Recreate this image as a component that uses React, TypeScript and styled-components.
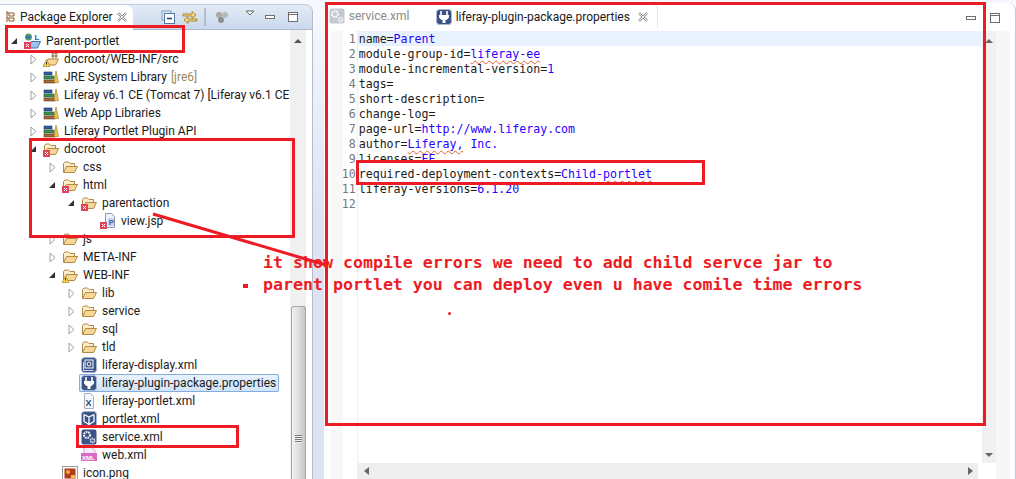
import React from 'react';
import styled, { createGlobalStyle } from 'styled-components';

const GlobalStyle = createGlobalStyle`
  html, body { margin: 0; padding: 0; background: #dde3f3; overflow: hidden; }
  #root { width: 1016px; height: 479px; }
  svg { flex: none; display: block; }
`;

const RED = '#ed1c24';
const VALUE = '#2a00ff';

const Page = styled.div`
  position: relative;
  display: flex;
  width: 1016px;
  height: 479px;
  overflow: hidden;
  background: linear-gradient(#f8f9fe, #dde3f3 45%);
  font-family: Roboto, sans-serif;
`;

const ExplorerPanel = styled.section`
  display: flex;
  flex-direction: column;
  width: 312px;
  margin-top: 4px;
  background: #fff;
  border-right: 1px solid #b4bdcc;
  border-top-right-radius: 8px;
  overflow: hidden;
`;

const ViewBar = styled.header`
  display: flex;
  align-items: center;
  height: 24px;
  flex: none;
  background: linear-gradient(#e3ebf6, #c9d9ec);
  border-top: 1px solid #c0ccdc;
  border-bottom: 1px solid #a9b9cf;
  border-top-right-radius: 8px;
`;

const ViewTab = styled.div`
  display: flex;
  align-items: center;
  width: 133px;
  height: 25px;
  margin: -1px 0 -1px;
  padding: 0 6px 0 5px;
  box-sizing: border-box;
  background: #fff;
  border-top-right-radius: 8px;
  font-size: 12px;
  color: #1a1a1a;
`;

const TabLabel = styled.span<{ $gap?: number }>`
  margin-left: ${(p) => p.$gap ?? 5}px;
  white-space: nowrap;
`;

const CloseMark = styled.svg`
  margin-left: auto;
`;

const ToolSlot = styled.span<{ $x: number; $raise?: number }>`
  display: flex;
  margin-left: ${(p) => p.$x}px;
  margin-bottom: ${(p) => p.$raise ?? 0}px;
`;

const ExplorerBody = styled.div`
  display: flex;
  flex: 1;
  min-height: 0;
`;

const TreeList = styled.ul`
  flex: none;
  width: 290px;
  margin: 0;
  padding: 2px 0 0;
  list-style: none;
  overflow: hidden;
`;

const Row = styled.li<{ $depth: number }>`
  display: flex;
  align-items: center;
  height: 18px;
  padding-left: ${(p) => 8 + p.$depth * 19}px;
  font-size: 12px;
  color: #1a1a1a;
  white-space: nowrap;
`;

const Twisty = styled.span`
  display: flex;
  align-items: center;
  justify-content: center;
  flex: none;
  width: 12px;
  margin-right: 4px;
`;

const NodeContent = styled.span<{ $selected?: boolean }>`
  display: flex;
  align-items: center;
  height: 18px;
  ${(p) =>
    p.$selected &&
    `
    margin-left: -2px;
    padding-left: 2px;
    width: 198px;
    background: linear-gradient(#eaf3fd, #d0e3f9);
    box-shadow: inset 0 0 0 1px #84acdd;
    border-radius: 2px;
  `}
`;

const NodeLabel = styled.span`
  margin-left: 5px;
`;

const Decoration = styled.span`
  margin-left: 4px;
  color: #9a8a5c;
`;

const Scrollbar = styled.div`
  flex: none;
  display: flex;
  flex-direction: column;
  align-items: center;
  width: 16px;
  background: #f0f0f0;
`;

const ScrollArrow = styled.svg`
  margin-top: 8px;
`;

const ScrollThumb = styled.div`
  margin-top: auto;
  width: 15px;
  height: 173px;
  box-sizing: border-box;
  padding-top: 128px;
  border: 1px solid #a8a8a8;
  border-bottom: 0;
  border-radius: 3px 3px 0 0;
  background: linear-gradient(90deg, #f2f2f2, #dcdcdc 55%, #c4c4c4);
`;

const Grip = styled.div`
  width: 7px;
  height: 8px;
  margin: 0 auto;
  background: repeating-linear-gradient(#777 0 1px, #eee 1px 2px);
`;

const EditorPanel = styled.section`
  display: flex;
  flex-direction: column;
  width: 692px;
  margin: 3px 0 0 11px;
  background: #fff;
  border-right: 1px solid #c4c8d4;
  border-top-right-radius: 8px;
  border-top-left-radius: 8px;
`;

const TabStrip = styled.header`
  display: flex;
  align-items: flex-end;
  flex: none;
  height: 28px;
`;

const EditorTab = styled.div<{ $active?: boolean }>`
  display: flex;
  align-items: center;
  height: 24px;
  padding: ${(p) => (p.$active ? '0 9px 0 3px' : '0 0 0 5px')};
  box-sizing: border-box;
  margin-bottom: 3px;
  width: ${(p) => (p.$active ? '225px' : '109px')};
  font-size: 12px;
  color: ${(p) => (p.$active ? '#1a1a1a' : '#8c8c8c')};
  ${(p) => p.$active && 'border-top: 1px solid #eceff4; border-right: 1px solid #e2e5ea; border-radius: 6px 6px 0 0;'}
`;

const EditorTools = styled.div`
  display: flex;
  align-items: center;
  gap: 14px;
  margin: 0 15px 8px auto;
`;

const EditorBody = styled.div`
  display: flex;
  flex: 1;
  min-height: 0;
`;

const Ruler = styled.div`
  flex: none;
  width: 27px;
  margin-left: 7px;
  background: linear-gradient(90deg, #f8f8f8 12px, #fff 12px);
  border-right: 1px solid #f0f0f0;
  box-sizing: border-box;
  padding-right: 1px;
`;

const LineNumber = styled.div`
  height: 15px;
  padding-top: 1px;
  box-sizing: border-box;
  line-height: 15px;
  text-align: right;
  font-family: 'DejaVu Sans Mono', monospace;
  font-size: 11.6px;
  color: #787878;
`;

const CodeColumn = styled.div`
  display: flex;
  flex-direction: column;
  flex: none;
  width: 623px;
`;

const Code = styled.div`
  flex: 1;
  font-family: 'DejaVu Sans Mono', monospace;
  font-size: 11.6px;
  color: #1a1a1a;
`;

const CodeLine = styled.div<{ $current?: boolean }>`
  height: 15px;
  padding: 1px 0 0 1px;
  box-sizing: border-box;
  line-height: 15px;
  white-space: pre;
  background: ${(p) => (p.$current ? '#e8f2fe' : 'transparent')};
`;

const Value = styled.span<{ $misspelt?: boolean }>`
  color: ${VALUE};
  ${(p) => p.$misspelt && 'text-decoration: underline wavy #e0603a 1px; text-underline-offset: 2px;'}
`;

const HScroll = styled.div`
  display: flex;
  align-items: center;
  justify-content: space-between;
  flex: none;
  height: 16px;
  margin-right: 3px;
  padding: 0 5px 0 6px;
  background: #eee;
`;

const VScroll = styled.div`
  display: flex;
  flex-direction: column;
  align-items: center;
  justify-content: space-between;
  flex: none;
  width: 14px;
  margin-left: 1px;
  padding: 7px 0 21px;
  box-sizing: border-box;
  background: linear-gradient(#f0f0f0 432px, #fff 432px);
`;

const EditorMargin = styled.div`
  flex: none;
  width: 14px;
  background: #f7f7f7;
`;

const Box = styled.div<{ $x: number; $y: number; $w: number; $h: number }>`
  position: absolute;
  left: ${(p) => p.$x}px;
  top: ${(p) => p.$y}px;
  width: ${(p) => p.$w}px;
  height: ${(p) => p.$h}px;
  box-sizing: border-box;
  border: 3px solid ${RED};
`;

const Note = styled.div`
  position: absolute;
  left: 263px;
  top: 252px;
  font-family: 'DejaVu Sans Mono', monospace;
  font-weight: 700;
  font-size: 16.6px;
  line-height: 22px;
  color: ${RED};
  white-space: pre;
`;

const Arrow = styled.svg`
  position: absolute;
  left: 0;
  top: 0;
  pointer-events: none;
`;

const Bullet = styled.div<{ $x: number; $y: number; $round?: boolean }>`
  position: absolute;
  left: ${(p) => p.$x}px;
  top: ${(p) => p.$y}px;
  width: ${(p) => (p.$round ? 3 : 5)}px;
  height: ${(p) => (p.$round ? 3 : 4)}px;
  background: ${RED};
  border-radius: ${(p) => (p.$round ? '50%' : '0')};
`;

const IconLetter = styled.text`
  font-family: 'Liberation Sans', sans-serif;
  font-weight: 700;
`;

type Badge = 'error' | 'warn' | undefined;

const BadgeMark = ({ kind }: { kind: Badge }) => {
  if (kind === 'error') {
    return (
      <g>
        <rect x="0" y="9" width="7" height="7" fill="#e2435a" />
        <path d="M2 11l3 3M5 11l-3 3" stroke="#fff" strokeWidth="1" />
      </g>
    );
  }
  if (kind === 'warn') {
    return (
      <g>
        <path d="M3.5 8.5L7 15.5H0z" fill="#f5d34f" stroke="#a98a1f" strokeWidth=".7" />
        <path d="M3.5 11v2.5" stroke="#333" strokeWidth="1" />
      </g>
    );
  }
  return null;
};

const Folder = ({ badge }: { badge?: Badge }) => (
  <svg width="16" height="16" viewBox="0 0 16 16">
    <path d="M1.5 13V4.5L3 3h3.5L8 4.5h4.5V7" fill="#fbeccb" stroke="#b28a45" />
    <path d="M1.5 13.5L4.5 7.5H15.5L12.5 13.5z" fill="#f6d798" stroke="#b28a45" />
    <BadgeMark kind={badge} />
  </svg>
);

const ProjectIcon = () => (
  <svg width="17" height="17" viewBox="0 0 17 17">
    <circle cx="4.5" cy="4" r="3.5" fill="#4f9a6c" />
    <path d="M2 2.5c2 1 4 0 5 2-2 2-3 0-5 1z" fill="#3c6fb4" />
    <IconLetter x="10.5" y="7" fontSize="8" fill="#2457b8">L</IconLetter>
    <path d="M7 8.5h9.5L13.5 15H6z" fill="#9cc2ea" stroke="#3e73b5" />
    <BadgeMark kind="error" />
  </svg>
);

const SourceFolder = () => (
  <svg width="16" height="16" viewBox="0 0 16 16">
    <path d="M2 14L5 8H15.5L12.5 14z" fill="#f6d798" stroke="#b28a45" />
    <path d="M8 2h7M8 5h7M10 .5v7M13 .5v7" stroke="#8a6a2a" strokeWidth="1" />
    <BadgeMark kind="warn" />
  </svg>
);

const Library = () => (
  <svg width="16" height="16" viewBox="0 0 16 16">
    <rect x="1" y="3" width="8" height="3" fill="#2f5f9e" stroke="#1c3660" strokeWidth=".6" />
    <rect x="1" y="7" width="10" height="3" fill="#3f8d52" stroke="#225a30" strokeWidth=".6" />
    <rect x="1" y="11" width="11" height="3" fill="#a6683a" stroke="#613a1c" strokeWidth=".6" />
    <path d="M11 13.5L13 2l2.5 11.5z" fill="#f1c54a" stroke="#99791c" strokeWidth=".6" />
  </svg>
);

const JspIcon = () => (
  <svg width="16" height="16" viewBox="0 0 16 16">
    <path d="M5.5 .5h6l3 3v11h-9z" fill="#eef2fa" stroke="#8c98ac" />
    <rect x="8" y="5" width="6" height="8" fill="#c5d5ee" />
    <IconLetter x="8.7" y="12" fontSize="8" fill="#4464a8">P</IconLetter>
    <BadgeMark kind="error" />
  </svg>
);

const BlueTile = ({ children }: { children: React.ReactNode }) => (
  <svg width="16" height="16" viewBox="0 0 16 16">
    <rect x=".5" y=".5" width="15" height="15" rx="3" fill="#3c5388" stroke="#a9b6d1" />
    {children}
  </svg>
);

const DisplayIcon = () => (
  <BlueTile>
    <rect x="4" y="3" width="8" height="8" fill="none" stroke="#fff" />
    <circle cx="8" cy="7" r="2" fill="none" stroke="#fff" />
    <path d="M2.5 5v8.5h10" fill="none" stroke="#cfd8ea" />
  </BlueTile>
);

const PluginIcon = () => (
  <BlueTile>
    <path d="M5 2v4M11 2v4" stroke="#fff" strokeWidth="1.6" />
    <path d="M3 6h10v2.5L10.5 11h-1v3h-3v-3h-1L3 8.5z" fill="#fff" />
  </BlueTile>
);

const XmlFile = () => (
  <svg width="16" height="16" viewBox="0 0 16 16">
    <path d="M3.5 .5h6l3 3v12h-9z" fill="#f2f5fa" stroke="#a5afbf" />
    <IconLetter x="4.6" y="13" fontSize="9" fill="#27447e">X</IconLetter>
  </svg>
);

const PortletIcon = () => (
  <BlueTile>
    <path d="M3 3.5L8 6l5-2.5M8 6v7.5M3 3.5v7L8 13.5l5-3v-7" fill="none" stroke="#fff" strokeWidth="1.3" />
  </BlueTile>
);

const GearIcon = ({ muted }: { muted?: boolean }) => (
  <svg width="16" height="16" viewBox="0 0 16 16">
    <rect x=".5" y=".5" width="15" height="15" rx="2" fill={muted ? '#c4c8d0' : '#3c5388'} />
    <circle cx="6" cy="6" r="3" fill="none" stroke="#fff" strokeWidth="2" strokeDasharray="1.6 .9" />
    <circle cx="11.5" cy="11.5" r="2" fill="none" stroke="#fff" strokeWidth="1.6" strokeDasharray="1.2 .7" />
  </svg>
);

const WebXml = () => (
  <svg width="16" height="16" viewBox="0 0 16 16">
    <path d="M3 .5h8l3 3v3H3z" fill="#f5eef8" stroke="#c0a8cc" />
    <rect x="0" y="6" width="16" height="8" fill="#d86cc6" />
    <IconLetter x="1" y="12.5" fontSize="6" fill="#fff">XML</IconLetter>
  </svg>
);

const PngIcon = () => (
  <svg width="16" height="16" viewBox="0 0 16 16">
    <rect x=".5" y="1.5" width="15" height="14" fill="#fff" stroke="#9a9a9a" />
    <rect x="2.5" y="3.5" width="11" height="10" fill="#b33a1f" />
    <circle cx="6" cy="7" r="2" fill="#f0b429" />
    <rect x="9" y="10" width="4" height="3" fill="#e8c04a" />
  </svg>
);

const TwistyOpen = () => (
  <svg width="8" height="8" viewBox="0 0 8 8">
    <path d="M7 1v6H1z" fill="#333" />
  </svg>
);

const TwistyClosed = () => (
  <svg width="7" height="11" viewBox="0 0 7 11">
    <path d="M1 1l5 4.5L1 10z" fill="#fff" stroke="#a0a0a0" />
  </svg>
);

type Node = {
  label: string;
  depth: number;
  icon: React.ReactNode;
  twisty?: 'open' | 'closed';
  note?: string;
  selected?: boolean;
};

const nodes: Node[] = [
  { label: 'Parent-portlet', depth: 0, twisty: 'open', icon: <ProjectIcon /> },
  { label: 'docroot/WEB-INF/src', depth: 1, twisty: 'closed', icon: <SourceFolder /> },
  { label: 'JRE System Library', depth: 1, twisty: 'closed', icon: <Library />, note: '[jre6]' },
  { label: 'Liferay v6.1 CE (Tomcat 7) [Liferay v6.1 CE', depth: 1, twisty: 'closed', icon: <Library /> },
  { label: 'Web App Libraries', depth: 1, twisty: 'closed', icon: <Library /> },
  { label: 'Liferay Portlet Plugin API', depth: 1, twisty: 'closed', icon: <Library /> },
  { label: 'docroot', depth: 1, twisty: 'open', icon: <Folder badge="error" /> },
  { label: 'css', depth: 2, twisty: 'closed', icon: <Folder /> },
  { label: 'html', depth: 2, twisty: 'open', icon: <Folder badge="error" /> },
  { label: 'parentaction', depth: 3, twisty: 'open', icon: <Folder badge="error" /> },
  { label: 'view.jsp', depth: 4, icon: <JspIcon /> },
  { label: 'js', depth: 2, twisty: 'closed', icon: <Folder /> },
  { label: 'META-INF', depth: 2, twisty: 'closed', icon: <Folder /> },
  { label: 'WEB-INF', depth: 2, twisty: 'open', icon: <Folder badge="warn" /> },
  { label: 'lib', depth: 3, twisty: 'closed', icon: <Folder /> },
  { label: 'service', depth: 3, twisty: 'closed', icon: <Folder /> },
  { label: 'sql', depth: 3, twisty: 'closed', icon: <Folder /> },
  { label: 'tld', depth: 3, twisty: 'closed', icon: <Folder /> },
  { label: 'liferay-display.xml', depth: 3, icon: <DisplayIcon /> },
  { label: 'liferay-plugin-package.properties', depth: 3, icon: <PluginIcon />, selected: true },
  { label: 'liferay-portlet.xml', depth: 3, icon: <XmlFile /> },
  { label: 'portlet.xml', depth: 3, icon: <PortletIcon /> },
  { label: 'service.xml', depth: 3, icon: <GearIcon /> },
  { label: 'web.xml', depth: 3, icon: <WebXml /> },
  { label: 'icon.png', depth: 2, icon: <PngIcon /> },
];

const MinimizeIcon = () => (
  <svg width="10" height="5" viewBox="0 0 10 5">
    <rect x=".5" y=".5" width="9" height="3" fill="#fff" stroke="#6e6e6e" />
  </svg>
);

const MaximizeIcon = () => (
  <svg width="10" height="10" viewBox="0 0 10 10">
    <rect x=".5" y=".5" width="9" height="9" fill="#fff" stroke="#6e6e6e" />
    <path d="M.5 2.5h9" stroke="#6e6e6e" />
  </svg>
);

const CloseIcon = () => (
  <CloseMark width="10" height="10" viewBox="0 0 10 10">
    <path d="M1 1l8 8M9 1l-8 8" stroke="#8a8a8a" strokeWidth="2.4" />
    <path d="M1 1l8 8M9 1l-8 8" stroke="#fff" strokeWidth=".9" />
  </CloseMark>
);

const App = () => (
  <Page>
    <GlobalStyle />
    <ExplorerPanel>
      <ViewBar>
        <ViewTab>
          <svg width="10" height="12" viewBox="0 0 10 12">
            <path d="M2 0v11M2 2h7v3H4V2M2 7h7v3H4V7" fill="#fff" stroke="#8a5a2a" />
          </svg>
          <TabLabel>Package Explorer</TabLabel>
          <CloseIcon />
        </ViewTab>
        <ToolSlot $x={28}>
          <svg width="14" height="14" viewBox="0 0 14 14">
            <rect x="1" y="1" width="9" height="9" fill="#dce6f4" stroke="#8aa0bc" />
            <rect x="3.5" y="3.5" width="10" height="10" fill="#fff" stroke="#4f78a8" />
            <path d="M6 8.5h5" stroke="#1f3f70" strokeWidth="1.4" />
          </svg>
        </ToolSlot>
        <ToolSlot $x={7}>
          <svg width="16" height="15" viewBox="0 0 16 15">
            <path d="M1 4h9V1.5L14 5l-4 3.5V6H1z" fill="#f5d98c" stroke="#b08a2c" />
            <path d="M15 9H6V6.5L2 10l4 3.5V11h9z" fill="#f5d98c" stroke="#b08a2c" />
          </svg>
        </ToolSlot>
        <ToolSlot $x={6}>
          <svg width="2" height="18" viewBox="0 0 2 18">
            <path d="M1 0v18" stroke="#8c9aae" />
          </svg>
        </ToolSlot>
        <ToolSlot $x={9}>
          <svg width="14" height="14" viewBox="0 0 14 14">
            <circle cx="4" cy="5" r="3" fill="#a8a8a8" />
            <circle cx="10" cy="5" r="3" fill="#b8b8b8" />
            <circle cx="6" cy="10" r="3" fill="#8e8e8e" />
          </svg>
        </ToolSlot>
        <ToolSlot $x={16} $raise={7}>
          <svg width="10" height="7" viewBox="0 0 10 7">
            <path d="M1 1h8L5 5z" fill="#fff" stroke="#666" />
          </svg>
        </ToolSlot>
        <ToolSlot $x={10}><MinimizeIcon /></ToolSlot>
        <ToolSlot $x={13}><MaximizeIcon /></ToolSlot>
      </ViewBar>
      <ExplorerBody>
        <TreeList>
          {nodes.map((node) => (
            <Row key={node.label} $depth={node.depth}>
              <Twisty>
                {node.twisty === 'open' && <TwistyOpen />}
                {node.twisty === 'closed' && <TwistyClosed />}
              </Twisty>
              <NodeContent $selected={node.selected}>
                {node.icon}
                <NodeLabel>
                  {node.label}
                  {node.note && <Decoration>{node.note}</Decoration>}
                </NodeLabel>
              </NodeContent>
            </Row>
          ))}
        </TreeList>
        <Scrollbar>
          <ScrollArrow width="8" height="5" viewBox="0 0 8 5">
            <path d="M0 5l4-4 4 4z" fill="#555" />
          </ScrollArrow>
          <ScrollThumb>
            <Grip />
          </ScrollThumb>
        </Scrollbar>
      </ExplorerBody>
    </ExplorerPanel>

    <EditorPanel>
      <TabStrip>
        <EditorTab>
          <GearIcon muted />
          <TabLabel $gap={4}>service.xml</TabLabel>
        </EditorTab>
        <EditorTab $active>
          <PluginIcon />
          <TabLabel $gap={4}>liferay-plugin-package.properties</TabLabel>
          <CloseIcon />
        </EditorTab>
        <EditorTools>
          <MinimizeIcon />
          <MaximizeIcon />
        </EditorTools>
      </TabStrip>
      <EditorBody>
        <Ruler>
          {Array.from({ length: 12 }, (_, i) => (
            <LineNumber key={i}>{i + 1}</LineNumber>
          ))}
        </Ruler>
        <CodeColumn>
          <Code>
            <CodeLine $current>name=<Value>Parent</Value></CodeLine>
            <CodeLine>module-group-id=<Value $misspelt>liferay-ee</Value></CodeLine>
            <CodeLine>module-incremental-version=<Value>1</Value></CodeLine>
            <CodeLine>tags=</CodeLine>
            <CodeLine>short-description=</CodeLine>
            <CodeLine>change-log=</CodeLine>
            <CodeLine>page-url=<Value>http://www.liferay.com</Value></CodeLine>
            <CodeLine>author=<Value $misspelt>Liferay,</Value><Value> Inc.</Value></CodeLine>
            <CodeLine>licenses=<Value>EE</Value></CodeLine>
            <CodeLine>required-deployment-contexts=<Value>Child-</Value><Value $misspelt>portlet</Value></CodeLine>
            <CodeLine>liferay-versions=<Value>6.1.20</Value></CodeLine>
            <CodeLine />
          </Code>
          <HScroll>
            <svg width="5" height="8" viewBox="0 0 5 8"><path d="M5 0L0 4l5 4z" fill="#666" /></svg>
            <svg width="5" height="8" viewBox="0 0 5 8"><path d="M0 0l5 4-5 4z" fill="#666" /></svg>
          </HScroll>
        </CodeColumn>
        <VScroll>
          <svg width="8" height="5" viewBox="0 0 8 5"><path d="M0 5l4-4 4 4z" fill="#666" /></svg>
          <svg width="8" height="5" viewBox="0 0 8 5"><path d="M0 0l4 4 4-4z" fill="#666" /></svg>
        </VScroll>
        <EditorMargin />
      </EditorBody>
    </EditorPanel>

    <Box $x={5} $y={25} $w={180} $h={28} />
    <Box $x={29} $y={138} $w={266} $h={100} />
    <Box $x={76} $y={425} $w={163} $h={23} />
    <Box $x={325} $y={2} $w={661} $h={424} />
    <Box $x={356} $y={160} $w={349} $h={25} />
    <Arrow width="1016" height="479" viewBox="0 0 1016 479">
      <path d="M153 214L326 265" stroke={RED} strokeWidth="3" />
    </Arrow>
    <Note>{'it show compile errors we need to add child servce jar to\nparent portlet you can deploy even u have comile time errors'}</Note>
    <Bullet $x={243} $y={284} />
    <Bullet $x={448} $y={312} $round />
  </Page>
);

export default App;
